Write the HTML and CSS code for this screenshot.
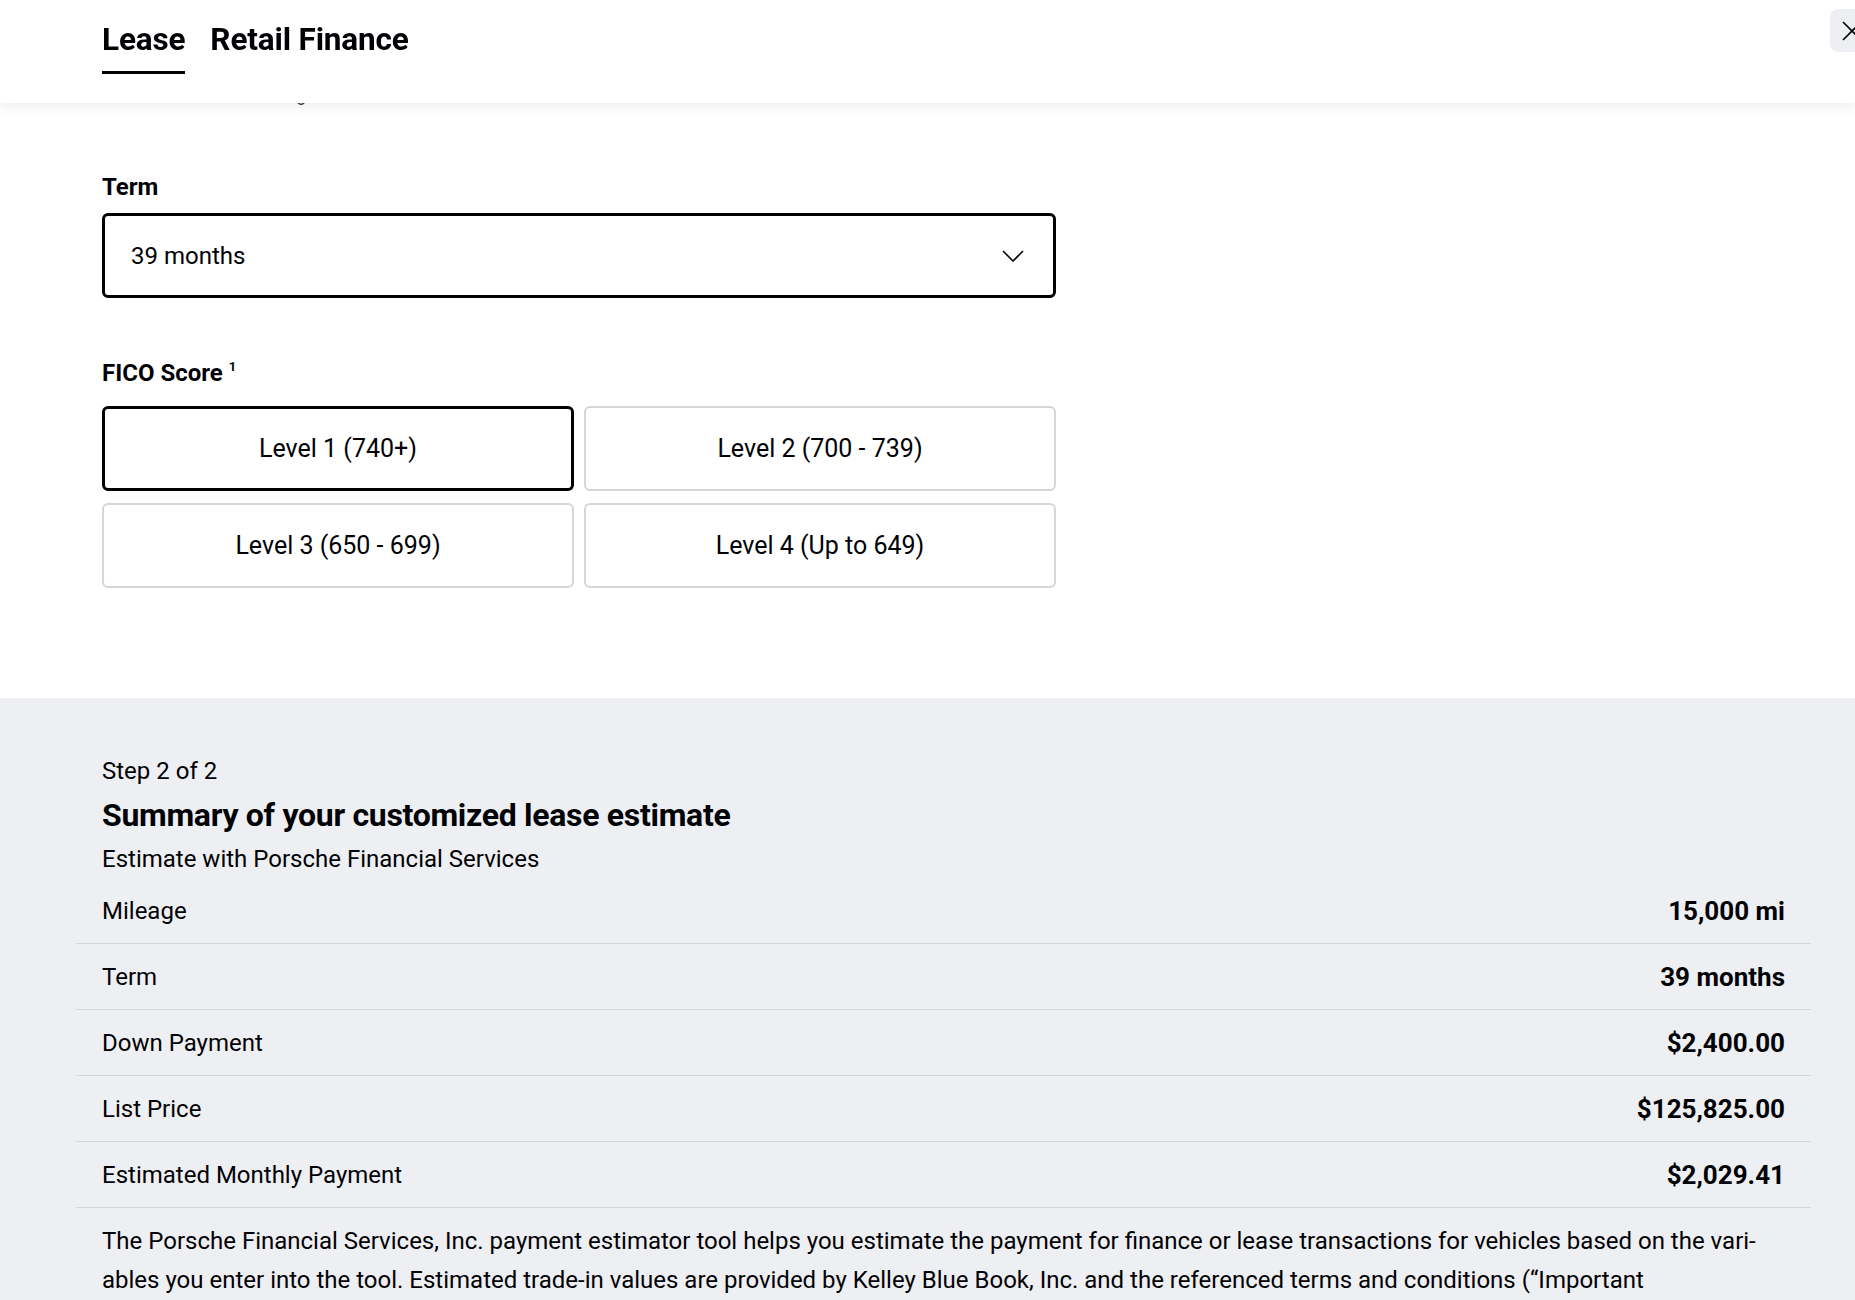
FILE: index.html
```html
<!DOCTYPE html>
<html lang="en">
<head>
<meta charset="utf-8">
<title>Payment Estimator</title>
<link rel="stylesheet" href="styles.css">
</head>
<body>
<header class="topbar">
  <nav class="tabs">
    <a class="tab active" href="#">Lease</a>
    <a class="tab" href="#">Retail Finance</a>
  </nav>
  <button class="close" aria-label="Close">
    <svg width="20" height="20" viewBox="0 0 20 20"><path d="M1 1 L19 19 M19 1 L1 19" stroke="#010205" stroke-width="1.6" fill="none"/></svg>
  </button>
</header>
<main>
  <section class="form">
    <p class="intro">Select a term and a rating below.</p>
    <label class="field-label">Term</label>
    <div class="select">
      <span>39 months</span>
      <svg width="22" height="12" viewBox="0 0 22 12"><path d="M1 1 L11 11 L21 1" stroke="#010205" stroke-width="1.6" fill="none"/></svg>
    </div>
    <div class="field-label fico">FICO Score <sup>1</sup></div>
    <div class="levels">
      <button class="level selected">Level 1 (740+)</button>
      <button class="level">Level 2 (700 - 739)</button>
      <button class="level">Level 3 (650 - 699)</button>
      <button class="level">Level 4 (Up to 649)</button>
    </div>
  </section>
  <section class="summary">
    <p class="step">Step 2 of 2</p>
    <h2 class="title">Summary of your customized lease estimate</h2>
    <p class="sub">Estimate with Porsche Financial Services</p>
    <dl class="rows">
      <div class="row"><dt>Mileage</dt><dd>15,000 mi</dd></div>
      <div class="row"><dt>Term</dt><dd>39 months</dd></div>
      <div class="row"><dt>Down Payment</dt><dd>$2,400.00</dd></div>
      <div class="row"><dt>List Price</dt><dd>$125,825.00</dd></div>
      <div class="row"><dt>Estimated Monthly Payment</dt><dd>$2,029.41</dd></div>
    </dl>
    <p class="disclaimer">The Porsche Financial Services, Inc. payment estimator tool helps you estimate the payment for finance or lease transactions for vehicles based on the vari&shy;ables you enter into the tool. Estimated trade-in values are provided by Kelley Blue Book, Inc. and the referenced terms and conditions (“Important</p>
  </section>
</main>
</body>
</html>
```
FILE: styles.css
```css
html, body {
  margin: 0;
  overflow: hidden;
}
body {
  font-family: Roboto, "Liberation Sans", sans-serif;
  color: #010205;
  background: #fff;
}
.topbar {
  position: fixed;
  top: 0;
  left: 0;
  right: 0;
  height: 103px;
  background: #fff;
  box-shadow: 0 3px 12px rgba(0, 0, 0, 0.08);
  z-index: 10;
  overflow: hidden;
}
.tabs {
  display: flex;
  gap: 25px;
  padding: 22px 0 0 102px;
}
.tab {
  font-size: 31.5px;
  font-weight: 700;
  line-height: 36px;
  padding-bottom: 13px;
  border-bottom: 3px solid transparent;
  color: #010205;
  text-decoration: none;
  letter-spacing: -0.15px;
}
.tab.active {
  border-bottom-color: #010205;
}
.close {
  position: absolute;
  top: 9px;
  left: 1830px;
  width: 44px;
  height: 43px;
  border: 0;
  border-radius: 8px;
  background: #eeeff2;
  padding: 0;
  display: flex;
  align-items: center;
  justify-content: center;
}
.form {
  padding: 82px 0 110px 102px;
}
.intro {
  margin: 0;
  font-size: 18px;
  line-height: 26px;
  color: #3a3b3e;
}
.field-label {
  display: block;
  margin-top: 65px;
  font-size: 24px;
  font-weight: 700;
  line-height: 28px;
}
.fico {
  margin-top: 61px;
}
.field-label sup {
  font-size: 13px;
  vertical-align: top;
  position: relative;
  top: -6px;
}
.select {
  margin-top: 12px;
  width: 954px;
  height: 85px;
  box-sizing: border-box;
  border: 3px solid #010205;
  border-radius: 6px;
  display: flex;
  align-items: center;
  justify-content: space-between;
  padding: 0 29px 0 26px;
  font-size: 24px;
}
.levels {
  margin-top: 19px;
  display: grid;
  grid-template-columns: 472px 472px;
  gap: 12px 10px;
  width: 954px;
}
.level {
  height: 85px;
  box-sizing: border-box;
  border: 2px solid #d5d6d9;
  border-radius: 6px;
  background: #fff;
  font-family: Roboto, "Liberation Sans", sans-serif;
  font-size: 25px;
  color: #010205;
  display: flex;
  align-items: center;
  justify-content: center;
}
.level.selected {
  border: 3px solid #010205;
}
.summary {
  background: #eeeff2;
  padding: 58px 44px 0 76px;
}
.step {
  margin: 0 0 0 26px;
  font-size: 24px;
  line-height: 30px;
}
.title {
  margin: 9px 0 0 26px;
  font-size: 32px;
  font-weight: 700;
  line-height: 40px;
  letter-spacing: -0.3px;
}
.sub {
  margin: 9px 0 0 26px;
  font-size: 24px;
  line-height: 30px;
}
.rows {
  margin: 4px 0 0;
}
.row {
  display: flex;
  justify-content: space-between;
  align-items: center;
  height: 66px;
  box-sizing: border-box;
  padding: 0 26px;
  border-bottom: 1px solid #d5d6da;
}
.row dt {
  font-size: 24px;
}
.row dd {
  margin: 0;
  font-size: 26px;
  font-weight: 700;
}
.disclaimer {
  margin: 14px 26px 0;
  font-size: 24px;
  line-height: 39px;
  hyphens: manual;
}
```
